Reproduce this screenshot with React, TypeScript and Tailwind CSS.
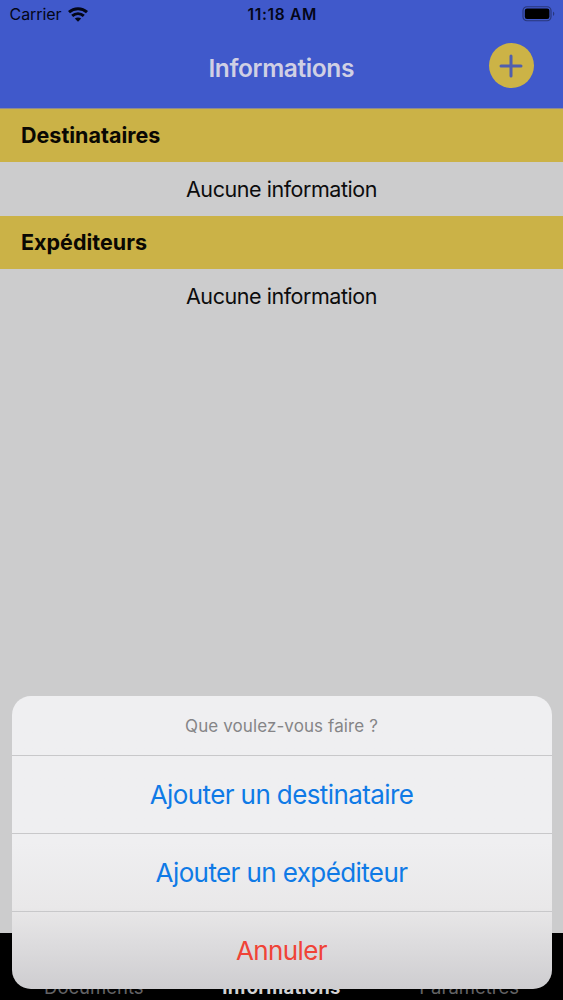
import clsx from 'clsx';

const sections = ['Destinataires', 'Expéditeurs'];

const actions = [
    { label: 'Ajouter un destinataire', destructive: false },
    { label: 'Ajouter un expéditeur', destructive: false },
    { label: 'Annuler', destructive: true },
];

const WifiIcon = () => (
    <svg width="20" height="15" viewBox="0 0 20 15" fill="none" stroke="#030617" strokeWidth="3">
        <path d="M1 5.2C6 .6 14 .6 19 5.2" />
        <path d="M4.2 8.9c3.4-3 8.2-3 11.6 0" />
        <path d="M10 14.8 6.8 11.6c1.8-1.6 4.6-1.6 6.4 0Z" fill="#030617" stroke="none" />
    </svg>
);

const BatteryIcon = () => (
    <svg width="33" height="16" viewBox="0 0 33 16" fill="none">
        <rect x="1" y=".75" width="28" height="14" rx="4" stroke="#28377c" strokeWidth="1.2" />
        <rect x="2.8" y="2.6" width="24.6" height="10.3" rx="2.2" fill="#000" />
        <path d="M31 5.5c1.8.9 1.8 3.6 0 4.5Z" fill="#28377c" />
    </svg>
);

const StatusBar = () => (
    <div className="flex h-[29px] items-center pr-[8px] pl-[9.5px] text-[16px] leading-none text-[#030617]">
        <div className="flex flex-1 items-center gap-[6px] pb-px">
            <span className="tracking-[-0.05px]">Carrier</span>
            <WifiIcon />
        </div>
        <span className="pt-px text-[15.5px] font-semibold tracking-[0.7px] whitespace-nowrap">11:18 AM</span>
        <div className="flex flex-1 justify-end pb-px">
            <BatteryIcon />
        </div>
    </div>
);

const Header = () => (
    <header className="h-[109px] shrink-0 border-b border-[#8f8b90] bg-[#4059cb]">
        <StatusBar />
        <div className="flex h-[73px] items-center pr-[29.5px]">
            <div className="flex-1" />
            <h1 className="pt-[5px] pl-[29px] text-center text-[24.5px] leading-none font-semibold tracking-[-0.38px] text-[#d0d0e4]">
                Informations
            </h1>
            <div className="flex flex-1 justify-end">
                <button className="flex size-[44.5px] items-center justify-center rounded-full bg-[#ccb346]">
                    <svg width="24" height="24" viewBox="0 0 24 24" stroke="#505fae" strokeWidth="3" strokeLinecap="round">
                        <path d="M12 2v20M2 12h20" />
                    </svg>
                </button>
            </div>
        </div>
    </header>
);

const ActionSheet = () => (
    <div className="absolute inset-x-[11.5px] top-[695.5px] h-[293.5px] overflow-hidden rounded-[19px] bg-linear-to-b from-[#efeff1] from-50% via-[#e9e8e9] via-72% to-[#cecdd0] text-center">
        <div className="flex h-[59.5px] items-center justify-center pt-[2px] text-[17px] tracking-[0.1px] text-[#858587]">
            Que voulez-vous faire ?
        </div>
        {actions.map(action => (
            <button
                key={action.label}
                className={clsx(
                    'flex h-[78px] w-full items-center justify-center border-t border-[#c8c8ca] text-[26px] tracking-[-0.6px]',
                    action.destructive ? 'text-[#f04337]' : 'text-[#0f7ae6]',
                )}
            >
                {action.label}
            </button>
        ))}
    </div>
);

export default function App() {
    return (
        <div className="relative flex h-[1000px] w-[563px] flex-col overflow-hidden bg-[#cccccd] font-['Inter',sans-serif]">
            <Header />
            <main className="flex-1">
                {sections.map(title => (
                    <section key={title}>
                        <h2 className="flex h-[53px] items-center bg-[#cbb247] pl-[21px] text-[21.5px] font-bold text-[#0a0803]">
                            {title}
                        </h2>
                        <p className="flex h-[54px] items-center justify-center text-[21.5px] tracking-[-0.45px] text-[#0c0c0d]">
                            Aucune information
                        </p>
                    </section>
                ))}
            </main>
            <nav className="grid h-[67px] shrink-0 grid-cols-3 items-end bg-black pb-[2px] text-center text-[18.5px] leading-[22px] text-[#636365]">
                <span>Documents</span>
                <span className="font-bold tracking-[0.25px] text-[#d2d2d4]">Informations</span>
                <span>Paramètres</span>
            </nav>
            <ActionSheet />
        </div>
    );
}
